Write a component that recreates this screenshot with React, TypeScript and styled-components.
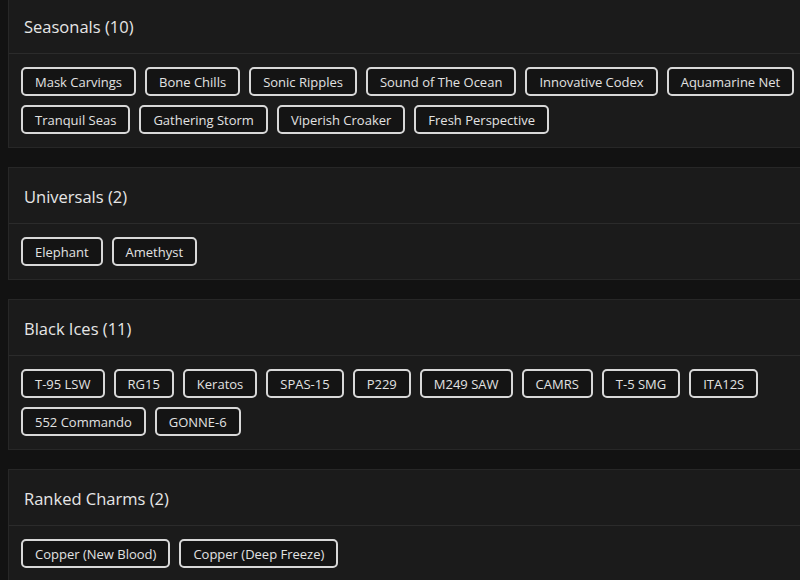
import React from 'react'
import styled, { createGlobalStyle } from 'styled-components'

const sections = [
	{
		title: 'Seasonals',
		items: [
			'Mask Carvings',
			'Bone Chills',
			'Sonic Ripples',
			'Sound of The Ocean',
			'Innovative Codex',
			'Aquamarine Net',
			'Tranquil Seas',
			'Gathering Storm',
			'Viperish Croaker',
			'Fresh Perspective',
		],
	},
	{
		title: 'Universals',
		items: ['Elephant', 'Amethyst'],
	},
	{
		title: 'Black Ices',
		items: [
			'T-95 LSW',
			'RG15',
			'Keratos',
			'SPAS-15',
			'P229',
			'M249 SAW',
			'CAMRS',
			'T-5 SMG',
			'ITA12S',
			'552 Commando',
			'GONNE-6',
		],
	},
	{
		title: 'Ranked Charms',
		items: ['Copper (New Blood)', 'Copper (Deep Freeze)'],
	},
]

const GlobalStyle = createGlobalStyle`
	html, body {
		margin: 0;
		background: #121212;
		overflow: hidden;
	}
	body {
		font-family: 'Open Sans', 'Liberation Sans', sans-serif;
		color: #e4e4e4;
	}
`

const App: React.FC = () => {
	return (
		<>
			<GlobalStyle />
			<StyledPage>
				{sections.map((section) => (
					<StyledCard key={section.title}>
						<StyledHeader>
							{section.title} ({section.items.length})
						</StyledHeader>
						<StyledChipList>
							{section.items.map((item) => (
								<Chip key={item}>{item}</Chip>
							))}
						</StyledChipList>
					</StyledCard>
				))}
			</StyledPage>
		</>
	)
}

// the list is scrolled a little, and wider than the window on the right
const StyledPage = styled.div`
	display: flex;
	flex-direction: column;
	gap: 19px;
	margin-top: -3px;
	padding-left: 8px;
	width: 822px;
`

const StyledCard = styled.section`
	background: #1b1b1b;
	border: 1px solid #272727;
`

const StyledHeader = styled.div`
	padding: 17px 15px 14px;
	font-size: 16.5px;
	font-weight: 500;
	line-height: 24px;
	color: #e6e6e6;
	border-bottom: 1px solid #2b2b2b;
`

const StyledChipList = styled.div`
	display: flex;
	flex-wrap: wrap;
	gap: 9px;
	padding: 13px 12px 13px 12px;
`

const Chip = styled.span`
	display: inline-flex;
	align-items: center;
	height: 29px;
	box-sizing: border-box;
	padding: 0 12px;
	border: 2px solid #d8d8d8;
	border-radius: 5px;
	background: #141414;
	font-size: 13px;
	color: #e2e2e2;
	white-space: nowrap;
`

export default App
